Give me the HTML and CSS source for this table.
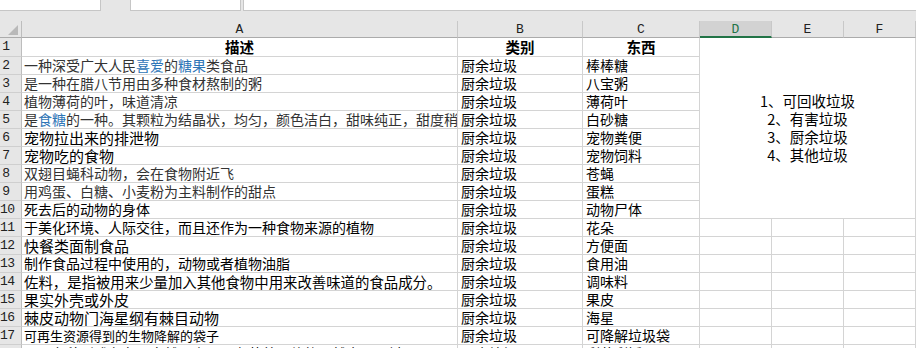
FILE: index.html
```html
<!DOCTYPE html>
<html lang="zh">
<head>
<meta charset="utf-8">
<title>垃圾分类</title>
<link rel="stylesheet" href="styles.css">
</head>
<body>
<div class="topbar">
  <div class="namebox"><span class="cut">B66</span></div>
  <div class="dots"><span class="cut">⋮</span></div>
  <div class="fbtns"><span class="cut">✕</span><span class="cut">✓</span><span class="cut fx">fx</span></div>
  <div class="formula"></div>
</div>
<div class="band"></div>
<div class="sheet">
  <div class="corner"><i class="tri"></i></div>
  <div class="ch">A</div><div class="ch">B</div><div class="ch">C</div><div class="ch sel">D</div><div class="ch">E</div><div class="ch">F</div>

  <div class="merged"><span>1、可回收垃圾</span><span>2、有害垃圾</span><span>3、厨余垃圾</span><span>4、其他垃圾</span></div>

  <div class="rh">1</div><div class="c hd">描述</div><div class="c hd">类别</div><div class="c hd">东西</div>
  <div class="rh">2</div><div class="c a dk">一种深受广大人民<em>喜爱</em>的<em>糖果</em>类食品</div><div class="c b">厨余垃圾</div><div class="c b">棒棒糖</div>
  <div class="rh">3</div><div class="c a dk">是一种在腊八节用由多种食材熬制的粥</div><div class="c b">厨余垃圾</div><div class="c b">八宝粥</div>
  <div class="rh">4</div><div class="c a dk">植物薄荷的叶，味道清凉</div><div class="c b">厨余垃圾</div><div class="c b">薄荷叶</div>
  <div class="rh">5</div><div class="c a dk">是<em>食糖</em>的一种。其颗粒为结晶状，均匀，颜色洁白，甜味纯正，甜度稍低于红糖。</div><div class="c b">厨余垃圾</div><div class="c b">白砂糖</div>
  <div class="rh">6</div><div class="c a lg">宠物拉出来的排泄物</div><div class="c b">厨余垃圾</div><div class="c b">宠物粪便</div>
  <div class="rh">7</div><div class="c a lg">宠物吃的食物</div><div class="c b">厨余垃圾</div><div class="c b">宠物饲料</div>
  <div class="rh">8</div><div class="c a dk">双翅目蝇科动物，会在食物附近飞</div><div class="c b">厨余垃圾</div><div class="c b">苍蝇</div>
  <div class="rh">9</div><div class="c a dk">用鸡蛋、白糖、小麦粉为主料制作的甜点</div><div class="c b">厨余垃圾</div><div class="c b">蛋糕</div>
  <div class="rh">10</div><div class="c a">死去后的动物的身体</div><div class="c b">厨余垃圾</div><div class="c b">动物尸体</div>
  <div class="rh">11</div><div class="c a">于美化环境、人际交往，而且还作为一种食物来源的植物</div><div class="c b">厨余垃圾</div><div class="c b">花朵</div><div class="c"></div><div class="c"></div><div class="c"></div>
  <div class="rh">12</div><div class="c a lg">快餐类面制食品</div><div class="c b">厨余垃圾</div><div class="c b">方便面</div><div class="c"></div><div class="c"></div><div class="c"></div>
  <div class="rh">13</div><div class="c a">制作食品过程中使用的，动物或者植物油脂</div><div class="c b">厨余垃圾</div><div class="c b">食用油</div><div class="c"></div><div class="c"></div><div class="c"></div>
  <div class="rh">14</div><div class="c a md">佐料，是指被用来少量加入其他食物中用来改善味道的食品成分。</div><div class="c b">厨余垃圾</div><div class="c b">调味料</div><div class="c"></div><div class="c"></div><div class="c"></div>
  <div class="rh">15</div><div class="c a lg">果实外壳或外皮</div><div class="c b">厨余垃圾</div><div class="c b">果皮</div><div class="c"></div><div class="c"></div><div class="c"></div>
  <div class="rh">16</div><div class="c a lg">棘皮动物门海星纲有棘目动物</div><div class="c b">厨余垃圾</div><div class="c b">海星</div><div class="c"></div><div class="c"></div><div class="c"></div>
  <div class="rh">17</div><div class="c a sm">可再生资源得到的生物降解的袋子</div><div class="c b">厨余垃圾</div><div class="c b">可降解垃圾袋</div><div class="c"></div><div class="c"></div><div class="c"></div>
  <div class="rh">18</div><div class="c a">是以各种形式存在于自然界中，具有营养价值的天然食品原料</div><div class="c b">厨余垃圾</div><div class="c b">剩菜剩饭</div><div class="c"></div><div class="c"></div><div class="c"></div>
</div>
</body>
</html>
```
FILE: styles.css
```css
html, body {
  margin: 0;
  padding: 0;
  width: 916px;
  height: 348px;
  overflow: hidden;
  background: #e6e6e6;
}

.topbar {
  display: flex;
  height: 11px;
  overflow: hidden;
  background: #e6e6e6;
  font-family: "Liberation Sans", "Noto Sans CJK SC", sans-serif;
}

.cut {
  display: block;
  line-height: 18px;
  margin-top: -15px;
  font-size: 13px;
}

.namebox {
  width: 101px;
  box-sizing: border-box;
  background: #fff;
  border-right: 1px solid #c6c6c6;
  border-bottom: 1px solid #c6c6c6;
  padding-left: 4px;
  color: #444;
}

.dots {
  width: 29px;
  display: flex;
  justify-content: center;
  color: #999;
}

.fbtns {
  width: 111px;
  box-sizing: border-box;
  background: #fff;
  border-left: 1px solid #c6c6c6;
  border-right: 1px solid #c6c6c6;
  border-bottom: 1px solid #c6c6c6;
  display: flex;
  gap: 20px;
  padding-left: 10px;
  color: #999;
}

.fbtns .fx {
  font-style: italic;
  color: #777;
}

.formula {
  flex: 1;
  margin-left: 2px;
  background: #fff;
  border-left: 1px solid #c6c6c6;
  border-bottom: 1px solid #c6c6c6;
}

.band {
  height: 10px;
  background: #e6e6e6;
}

.sheet {
  display: grid;
  grid-template-columns: 22px 436px 125px 117px 72px 72px 72px;
  grid-template-rows: 17px 19px repeat(17, 18px);
  background: #fff;
  font-family: "Noto Sans CJK SC", "Noto Sans CJK JP", sans-serif;
  font-size: 14px;
  color: #000;
}

.corner {
  background: #e6e6e6;
  border-right: 1px solid #bdbdbd;
  border-bottom: 1px solid #ababab;
  display: flex;
  justify-content: flex-end;
  align-items: flex-end;
  padding: 0 3px 2px 0;
  box-sizing: border-box;
}

.tri {
  width: 0;
  height: 0;
  border-left: 10px solid transparent;
  border-bottom: 10px solid #b9b9b9;
}

.ch {
  background: #e6e6e6;
  border-right: 1px solid #c8c8c8;
  border-bottom: 1px solid #ababab;
  box-sizing: border-box;
  text-align: center;
  font-family: "Liberation Mono", monospace;
  font-size: 13px;
  line-height: 17px;
  color: #222;
}

.ch.sel {
  background: #d2d2d2;
  color: #217346;
  border-bottom: 2px solid #217346;
}

.rh {
  background: #e6e6e6;
  border-right: 1px solid #bdbdbd;
  border-bottom: 1px solid #cfcfcf;
  box-sizing: border-box;
  font-family: "Liberation Mono", monospace;
  font-size: 13px;
  line-height: 18px;
  color: #222;
  text-align: center;
  padding-right: 9px;
  letter-spacing: -0.5px;
  white-space: nowrap;
}

.c {
  border-right: 1px solid #d4d4d4;
  border-bottom: 1px solid #d4d4d4;
  box-sizing: border-box;
  white-space: nowrap;
  overflow: hidden;
  line-height: 17px;
  padding-left: 2px;
}

.c.b {
  padding-left: 3px;
}

.c.hd {
  text-align: center;
  font-weight: bold;
  font-size: 14.5px;
  line-height: 18px;
  padding-left: 0;
}

.c.dk {
  color: #333;
}

.c em {
  font-style: normal;
  color: #2e75b6;
}

.c.lg {
  font-size: 15px;
}

.c.md {
  font-size: 14.4px;
}

.c.sm {
  font-size: 13px;
}

.merged {
  grid-column: 5 / 8;
  grid-row: 2 / 12;
  border-right: 1px solid #d4d4d4;
  border-bottom: 1px solid #d4d4d4;
  box-sizing: border-box;
  display: flex;
  flex-direction: column;
  justify-content: center;
  align-items: center;
  line-height: 18px;
  font-size: 14.5px;
}
```
